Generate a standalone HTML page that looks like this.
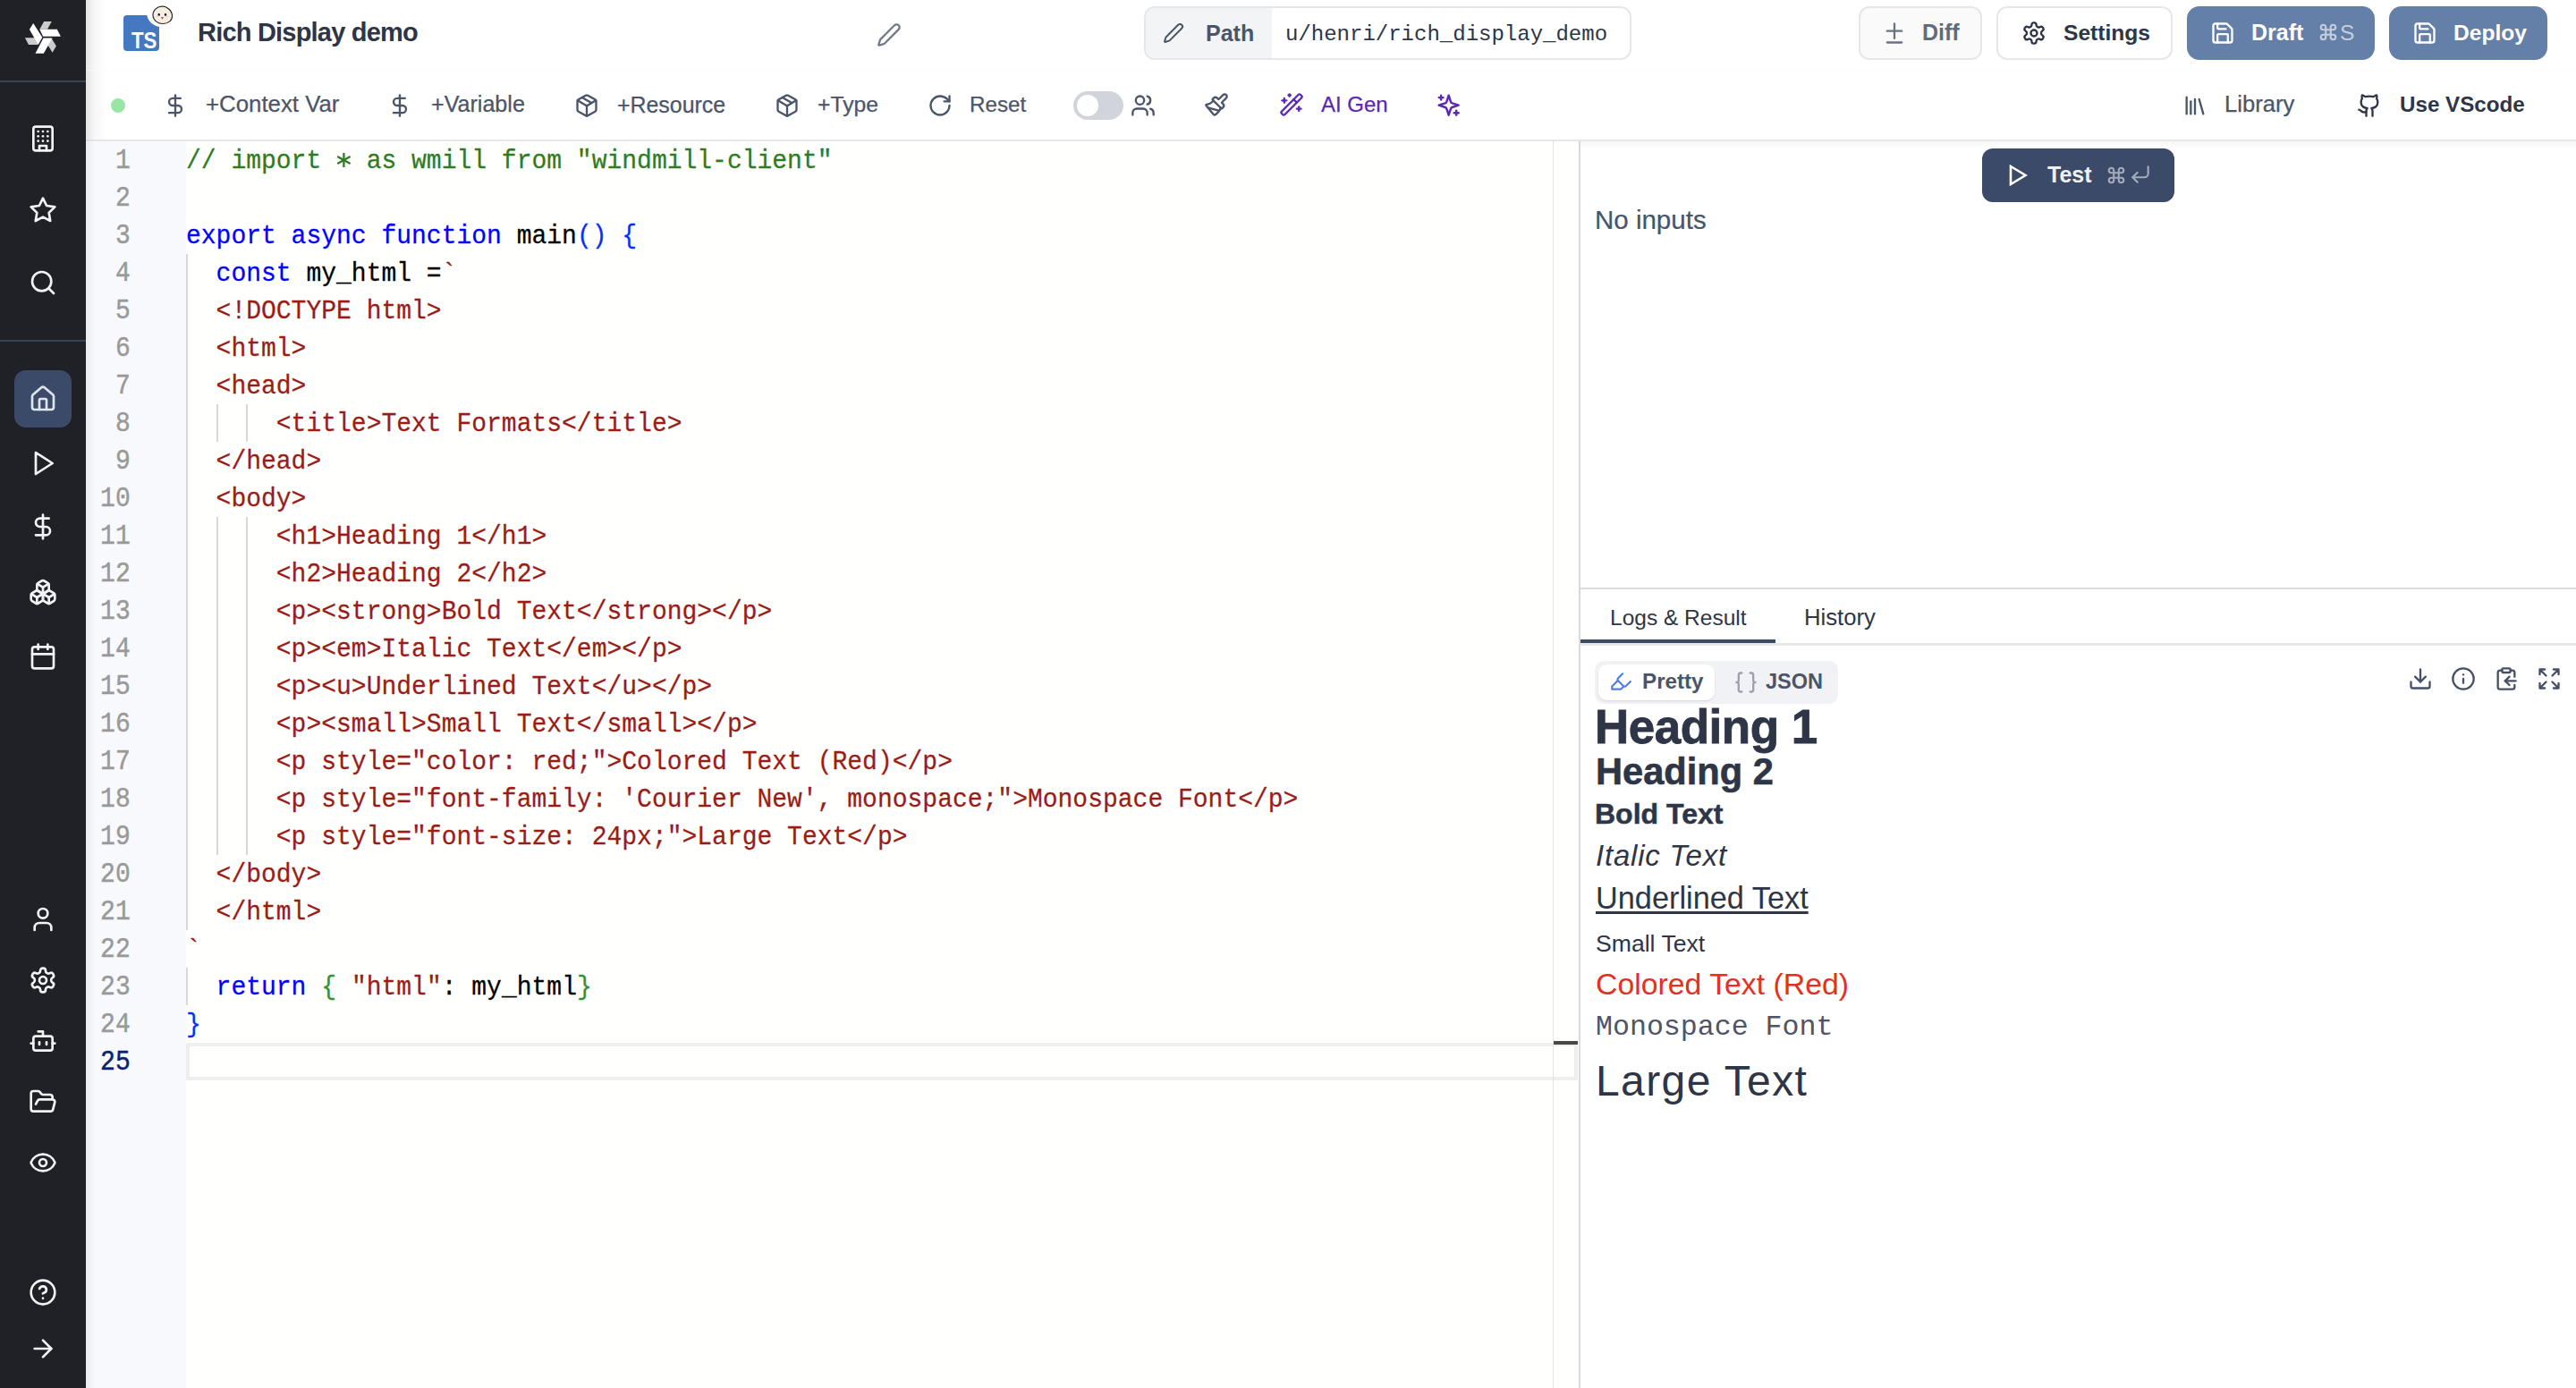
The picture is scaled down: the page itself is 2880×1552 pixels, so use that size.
<!DOCTYPE html>
<html><head><meta charset="utf-8">
<style>
*{box-sizing:border-box;margin:0;padding:0}
html,body{width:2880px;height:1552px;overflow:hidden;background:#fff;font-family:"Liberation Sans",sans-serif}
.a{position:absolute}
svg{display:block;overflow:visible}
.ic{fill:none;stroke:currentColor;stroke-linecap:round;stroke-linejoin:round}
.code{position:absolute;font-family:"Liberation Mono",monospace;font-size:28px;white-space:pre;line-height:42px;height:42px;transform:scaleY(1.05);transform-origin:0 28.5px;-webkit-text-stroke:0.25px currentColor}
.ln{position:absolute;font-family:"Liberation Mono",monospace;font-size:28px;line-height:42px;height:42px;color:#9a9a9a;text-align:right;width:80px;transform:scaleY(1.1);transform-origin:0 28.5px;-webkit-text-stroke:0.4px currentColor}
.b1{color:#0431fa}.cm{color:#2e7c22}.kw{color:#0000ff}.st{color:#9a1c17}.df{color:#000}.gb{color:#319331}
</style></head><body>

<div class="a" style="left:0;top:0;width:96px;height:1552px;background:#1f2127"></div>
<div class="a" style="left:0;top:90px;width:96px;height:2px;background:#3a4356"></div>
<div class="a" style="left:0;top:380px;width:96px;height:2px;background:#3a4356"></div>
<svg class="a" style="left:20px;top:16px" width="56" height="52" viewBox="0 0 56 52">
<polygon points="7.9,26.2 20,26.2 22.5,34.1 12,34.1" fill="#cccccc"/>
<polygon points="17.2,9.9 27.3,25.8 22.8,34.1 12.9,17.0" fill="#ffffff"/>
<polygon points="29.2,8.1 37.8,8.1 33.0,16.7 24.3,16.7" fill="#cccccc"/>
<polygon points="24.3,16.7 43.8,16.7 47.9,24.7 28.1,24.7" fill="#ffffff"/>
<polygon points="37.8,27.3 42.9,35.6 38.6,42.7 33.7,34.8" fill="#cccccc"/>
<polygon points="28.5,26.4 38.6,26.4 28.8,43.8 19.5,43.8" fill="#ffffff"/>
</svg>
<div class="a" style="left:16px;top:414px;width:64px;height:64px;border-radius:13px;background:#3b4a69"></div>
<svg class="a ic" style="left:32px;top:430px;color:#dfe5ef" width="32" height="32" viewBox="0 0 24 24" stroke-width="2"><path d="M15 21v-8a1 1 0 0 0-1-1h-4a1 1 0 0 0-1 1v8"/><path d="M3 10a2 2 0 0 1 .709-1.528l7-5.999a2 2 0 0 1 2.582 0l7 5.999A2 2 0 0 1 21 10v9a2 2 0 0 1-2 2H5a2 2 0 0 1-2-2z"/></svg>
<svg class="a ic" style="left:32px;top:139px;color:#f2f3f5" width="32" height="32" viewBox="0 0 24 24" stroke-width="2"><rect width="16" height="20" x="4" y="2" rx="2" ry="2"/><path d="M9 22v-4h6v4"/><path d="M8 6h.01"/><path d="M16 6h.01"/><path d="M12 6h.01"/><path d="M12 10h.01"/><path d="M12 14h.01"/><path d="M16 10h.01"/><path d="M16 14h.01"/><path d="M8 10h.01"/><path d="M8 14h.01"/></svg>
<svg class="a ic" style="left:32px;top:219px;color:#f2f3f5" width="32" height="32" viewBox="0 0 24 24" stroke-width="2"><polygon points="12 2 15.09 8.26 22 9.27 17 14.14 18.18 21.02 12 17.77 5.82 21.02 7 14.14 2 9.27 8.91 8.26 12 2"/></svg>
<svg class="a ic" style="left:32px;top:300px;color:#f2f3f5" width="32" height="32" viewBox="0 0 24 24" stroke-width="2"><circle cx="11" cy="11" r="8"/><path d="m21 21-4.3-4.3"/></svg>
<svg class="a ic" style="left:32px;top:502px;color:#f2f3f5" width="32" height="32" viewBox="0 0 24 24" stroke-width="2"><polygon points="6 3 20 12 6 21 6 3"/></svg>
<svg class="a ic" style="left:32px;top:573px;color:#f2f3f5" width="32" height="32" viewBox="0 0 24 24" stroke-width="2"><line x1="12" x2="12" y1="2" y2="22"/><path d="M17 5H9.5a3.5 3.5 0 0 0 0 7h5a3.5 3.5 0 0 1 0 7H6"/></svg>
<svg class="a ic" style="left:32px;top:646px;color:#f2f3f5" width="32" height="32" viewBox="0 0 24 24" stroke-width="2"><path d="M2.97 12.92A2 2 0 0 0 2 14.63v3.24a2 2 0 0 0 .97 1.71l3 1.8a2 2 0 0 0 2.06 0L12 19v-5.5l-5-3-4.03 2.42Z"/><path d="m7 16.5-4.74-2.85"/><path d="m7 16.5 5-3"/><path d="M7 16.5v5.17"/><path d="M12 13.5V19l3.970 2.38a2 2 0 0 0 2.06 0l3-1.8a2 2 0 0 0 .97-1.71v-3.24a2 2 0 0 0-.97-1.71L17 10.5l-5 3Z"/><path d="m17 16.5-5-3"/><path d="m17 16.5 4.74-2.85"/><path d="M17 16.5v5.17"/><path d="M7.97 4.42A2 2 0 0 0 7 6.13v4.37l5 3 5-3V6.13a2 2 0 0 0-.97-1.71l-3-1.8a2 2 0 0 0-2.06 0l-3 1.8Z"/><path d="M12 8 7.26 5.15"/><path d="m12 8 4.74-2.85"/><path d="M12 13.5V8"/></svg>
<svg class="a ic" style="left:32px;top:718px;color:#f2f3f5" width="32" height="32" viewBox="0 0 24 24" stroke-width="2"><rect width="18" height="18" x="3" y="4" rx="2" ry="2"/><line x1="16" x2="16" y1="2" y2="6"/><line x1="8" x2="8" y1="2" y2="6"/><line x1="3" x2="21" y1="10" y2="10"/></svg>
<svg class="a ic" style="left:32px;top:1012px;color:#f2f3f5" width="32" height="32" viewBox="0 0 24 24" stroke-width="2"><path d="M19 21v-2a4 4 0 0 0-4-4H9a4 4 0 0 0-4 4v2"/><circle cx="12" cy="7" r="4"/></svg>
<svg class="a ic" style="left:32px;top:1080px;color:#f2f3f5" width="32" height="32" viewBox="0 0 24 24" stroke-width="2"><path d="M12.22 2h-.44a2 2 0 0 0-2 2v.18a2 2 0 0 1-1 1.73l-.43.25a2 2 0 0 1-2 0l-.15-.08a2 2 0 0 0-2.73.73l-.22.38a2 2 0 0 0 .73 2.73l.15.1a2 2 0 0 1 1 1.72v.51a2 2 0 0 1-1 1.74l-.15.09a2 2 0 0 0-.73 2.73l.22.38a2 2 0 0 0 2.730.73l.15-.08a2 2 0 0 1 2 0l.43.25a2 2 0 0 1 1 1.73V20a2 2 0 0 0 2 2h.44a2 2 0 0 0 2-2v-.18a2 2 0 0 1 1-1.730l.43-.25a2 2 0 0 1 2 0l.15.08a2 2 0 0 0 2.73-.73l.22-.39a2 2 0 0 0-.73-2.73l-.15-.08a2 2 0 0 1-1-1.74v-.5a2 2 0 0 1 1-1.74l.15-.09a2 2 0 0 0 .73-2.73l-.22-.38a2 2 0 0 0-2.73-.73l-.15.08a2 2 0 0 1-2 0l-.43-.25a2 2 0 0 1-1-1.73V4a2 2 0 0 0-2-2z"/><circle cx="12" cy="12" r="3"/></svg>
<svg class="a ic" style="left:32px;top:1148px;color:#f2f3f5" width="32" height="32" viewBox="0 0 24 24" stroke-width="2"><path d="M12 8V4H8"/><rect width="16" height="12" x="4" y="8" rx="2"/><path d="M2 14h2"/><path d="M20 14h2"/><path d="M15 13v2"/><path d="M9 13v2"/></svg>
<svg class="a ic" style="left:32px;top:1216px;color:#f2f3f5" width="32" height="32" viewBox="0 0 24 24" stroke-width="2"><path d="m6 14 1.5-2.9A2 2 0 0 1 9.24 10H20a2 2 0 0 1 1.94 2.5l-1.54 6a2 2 0 0 1-1.95 1.5H4a2 2 0 0 1-2-2V5a2 2 0 0 1 2-2h3.9a2 2 0 0 1 1.69.9l.81 1.2a2 2 0 0 0 1.67.9H18a2 2 0 0 1 2 2v2"/></svg>
<svg class="a ic" style="left:32px;top:1284px;color:#f2f3f5" width="32" height="32" viewBox="0 0 24 24" stroke-width="2"><path d="M2.062 12.348a1 1 0 0 1 0-.696 10.75 10.75 0 0 1 19.876 0 1 1 0 0 1 0 .696 10.75 10.75 0 0 1-19.876 0"/><circle cx="12" cy="12" r="3"/></svg>
<svg class="a ic" style="left:32px;top:1428.5px;color:#f2f3f5" width="32" height="32" viewBox="0 0 24 24" stroke-width="2"><circle cx="12" cy="12" r="10"/><path d="M9.09 9a3 3 0 0 1 5.83 1c0 2-3 3-3 3"/><path d="M12 17h.01"/></svg>
<svg class="a ic" style="left:32px;top:1492px;color:#f2f3f5" width="32" height="32" viewBox="0 0 24 24" stroke-width="2"><path d="M5 12h14"/><path d="m12 5 7 7-7 7"/></svg>
<div class="a" style="left:96px;top:0;width:24px;height:1552px;background:linear-gradient(to right,rgba(0,0,0,0.05),rgba(0,0,0,0))"></div>
<div class="a" style="left:96px;top:78px;width:2784px;height:1px;background:#fafbfc"></div>
<svg class="a" style="left:138px;top:17px" width="40" height="40" viewBox="0 0 40 40">
<rect x="0" y="0" width="40" height="40" rx="4" fill="#4478c1"/>
<text x="9" y="36.7" textLength="28.5" lengthAdjust="spacingAndGlyphs" font-family="Liberation Sans" font-weight="700" font-size="25.5" fill="#fff">TS</text>
</svg>
<svg class="a" style="left:160px;top:0px" width="40" height="36" viewBox="0 0 40 36">
<circle cx="20" cy="14" r="16" fill="#fff"/>
<path d="M21 7 C15 7.5 10.5 12 11 17.5 C11.5 23 16.5 26.5 22 26.5 C28 26.5 32.5 23 32.5 18 C32.5 12 27 7 21 7Z" fill="#f6efe0" stroke="#222" stroke-width="1.1"/>
<ellipse cx="17.7" cy="16.4" rx="1.2" ry="1.3" fill="#111"/><ellipse cx="25" cy="16.4" rx="1.2" ry="1.3" fill="#111"/>
<ellipse cx="16" cy="18.3" rx="1.5" ry="0.8" fill="#f5c6d6"/><ellipse cx="27" cy="18.3" rx="1.5" ry="0.8" fill="#f5c6d6"/>
<path d="M19.8 19.2 h3.3 l-1.65 2.4z" fill="#c0282d"/>
</svg>
<div class="a" style="left:221px;top:22.45px;font-size:29px;color:#2e3546;font-weight:700;font-family:'Liberation Sans';line-height:1;white-space:pre;letter-spacing:-0.8px">Rich Display demo</div>
<svg class="a ic" style="left:979.8px;top:24.6px;color:#737b88" width="28" height="28" viewBox="0 0 24 24" stroke-width="2"><path d="M21.174 6.812a1 1 0 0 0-3.986-3.987L3.842 16.174a2 2 0 0 0-.5.83l-1.321 4.352a.5.5 0 0 0 .623.622l4.353-1.32a2 2 0 0 0 .83-.497z"/></svg>
<div class="a" style="left:1279px;top:7px;width:545px;height:60px;border:2px solid #e5e7eb;border-radius:12px;background:#fff;overflow:hidden"><div style="position:absolute;left:0;top:0;width:141px;height:56px;background:#f3f4f6"></div></div>
<svg class="a ic" style="left:1300px;top:25px;color:#4b5563" width="24" height="24" viewBox="0 0 24 24" stroke-width="2"><path d="M21.174 6.812a1 1 0 0 0-3.986-3.987L3.842 16.174a2 2 0 0 0-.5.83l-1.321 4.352a.5.5 0 0 0 .623.622l4.353-1.32a2 2 0 0 0 .83-.497z"/></svg>
<div class="a" style="left:1348px;top:24.84px;font-size:25px;color:#4b5569;font-weight:700;font-family:'Liberation Sans';line-height:1;white-space:pre">Path</div>
<div class="a" style="left:1437px;top:26.60px;font-size:24px;color:#2d3546;font-weight:400;font-family:'Liberation Mono';line-height:1;white-space:pre">u/henri/rich_display_demo</div>
<div class="a" style="left:2078px;top:7px;width:138px;height:60px;border:2px solid #e5e7eb;border-radius:12px;background:#fafafa"></div>
<svg class="a ic" style="left:2104px;top:23px;color:#6b7280" width="28" height="28" viewBox="0 0 24 24" stroke-width="2"><path d="M12 3v14"/><path d="M5 10h14"/><path d="M5 21h14"/></svg>
<div class="a" style="left:2149px;top:24.34px;font-size:25px;color:#5f6b7e;font-weight:700;font-family:'Liberation Sans';line-height:1;white-space:pre">Diff</div>
<div class="a" style="left:2232px;top:7px;width:197px;height:60px;border:2px solid #e5e7eb;border-radius:12px;background:#fff"></div>
<svg class="a ic" style="left:2260px;top:23px;color:#2d3546" width="28" height="28" viewBox="0 0 24 24" stroke-width="2"><path d="M12.22 2h-.44a2 2 0 0 0-2 2v.18a2 2 0 0 1-1 1.73l-.43.25a2 2 0 0 1-2 0l-.15-.08a2 2 0 0 0-2.73.73l-.22.38a2 2 0 0 0 .73 2.73l.15.1a2 2 0 0 1 1 1.72v.51a2 2 0 0 1-1 1.74l-.15.09a2 2 0 0 0-.73 2.73l.22.38a2 2 0 0 0 2.730.73l.15-.08a2 2 0 0 1 2 0l.43.25a2 2 0 0 1 1 1.73V20a2 2 0 0 0 2 2h.44a2 2 0 0 0 2-2v-.18a2 2 0 0 1 1-1.730l.43-.25a2 2 0 0 1 2 0l.15.08a2 2 0 0 0 2.73-.73l.22-.39a2 2 0 0 0-.73-2.73l-.15-.08a2 2 0 0 1-1-1.74v-.5a2 2 0 0 1 1-1.74l.15-.09a2 2 0 0 0 .73-2.73l-.22-.38a2 2 0 0 0-2.73-.73l-.15.08a2 2 0 0 1-2 0l-.43-.25a2 2 0 0 1-1-1.73V4a2 2 0 0 0-2-2z"/><circle cx="12" cy="12" r="3"/></svg>
<div class="a" style="left:2307px;top:24.68px;font-size:24.6px;color:#2d3546;font-weight:700;font-family:'Liberation Sans';line-height:1;white-space:pre">Settings</div>
<div class="a" style="left:2445px;top:7px;width:210px;height:60px;border-radius:14px;background:#6580a8"></div>
<svg class="a ic" style="left:2471px;top:23px;color:#ffffff" width="28" height="28" viewBox="0 0 24 24" stroke-width="2"><path d="M15.2 3a2 2 0 0 1 1.4.6l3.8 3.8a2 2 0 0 1 .6 1.4V19a2 2 0 0 1-2 2H5a2 2 0 0 1-2-2V5a2 2 0 0 1 2-2z"/><path d="M17 21v-7a1 1 0 0 0-1-1H8a1 1 0 0 0-1 1v7"/><path d="M7 3v4a1 1 0 0 0 1 1h7"/></svg>
<div class="a" style="left:2517px;top:24.34px;font-size:25px;color:#ffffff;font-weight:700;font-family:'Liberation Sans';line-height:1;white-space:pre">Draft</div>
<svg class="a ic" style="left:2592px;top:25px;color:#c5cedd" width="22" height="22" viewBox="0 0 24 24" stroke-width="2.3"><path d="M15 6v12a3 3 0 1 0 3-3H6a3 3 0 1 0 3 3V6a3 3 0 1 0-3 3h12a3 3 0 1 0-3-3"/></svg>
<div class="a" style="left:2616px;top:24.76px;font-size:24.5px;color:#c5cedd;font-weight:400;font-family:'Liberation Sans';line-height:1;white-space:pre">S</div>
<div class="a" style="left:2671px;top:7px;width:177px;height:60px;border-radius:14px;background:#6580a8"></div>
<svg class="a ic" style="left:2697px;top:23px;color:#ffffff" width="28" height="28" viewBox="0 0 24 24" stroke-width="2"><path d="M15.2 3a2 2 0 0 1 1.4.6l3.8 3.8a2 2 0 0 1 .6 1.4V19a2 2 0 0 1-2 2H5a2 2 0 0 1-2-2V5a2 2 0 0 1 2-2z"/><path d="M17 21v-7a1 1 0 0 0-1-1H8a1 1 0 0 0-1 1v7"/><path d="M7 3v4a1 1 0 0 0 1 1h7"/></svg>
<div class="a" style="left:2743px;top:24.68px;font-size:24.6px;color:#ffffff;font-weight:700;font-family:'Liberation Sans';line-height:1;white-space:pre">Deploy</div>
<div class="a" style="left:96px;top:156px;width:2784px;height:2px;background:#e5e7eb"></div>
<div class="a" style="left:124px;top:110px;width:16px;height:16px;border-radius:50%;background:#98e6a6"></div>
<svg class="a ic" style="left:182px;top:104px;color:#4b5569" width="28" height="28" viewBox="0 0 24 24" stroke-width="2"><line x1="12" x2="12" y1="2" y2="22"/><path d="M17 5H9.5a3.5 3.5 0 0 0 0 7h5a3.5 3.5 0 0 1 0 7H6"/></svg>
<div class="a" style="left:230px;top:103.86px;font-size:25.8px;color:#4b5569;font-weight:400;font-family:'Liberation Sans';line-height:1;white-space:pre;-webkit-text-stroke:0.25px currentColor">+Context Var</div>
<svg class="a ic" style="left:433px;top:104px;color:#4b5569" width="28" height="28" viewBox="0 0 24 24" stroke-width="2"><line x1="12" x2="12" y1="2" y2="22"/><path d="M17 5H9.5a3.5 3.5 0 0 0 0 7h5a3.5 3.5 0 0 1 0 7H6"/></svg>
<div class="a" style="left:482px;top:104.45px;font-size:25.1px;color:#4b5569;font-weight:400;font-family:'Liberation Sans';line-height:1;white-space:pre;-webkit-text-stroke:0.25px currentColor">+Variable</div>
<svg class="a ic" style="left:642px;top:104px;color:#4b5569" width="28" height="28" viewBox="0 0 24 24" stroke-width="2"><path d="M11 21.73a2 2 0 0 0 2 0l7-4A2 2 0 0 0 21 16V8a2 2 0 0 0-1-1.73l-7-4a2 2 0 0 0-2 0l-7 4A2 2 0 0 0 3 8v8a2 2 0 0 0 1 1.73z"/><path d="M12 22V12"/><path d="m3.3 7 7.703 4.734a2 2 0 0 0 1.994 0L20.7 7"/><path d="m7.5 4.27 9 5.15"/></svg>
<div class="a" style="left:690px;top:104.62px;font-size:24.9px;color:#4b5569;font-weight:400;font-family:'Liberation Sans';line-height:1;white-space:pre;-webkit-text-stroke:0.25px currentColor">+Resource</div>
<svg class="a ic" style="left:866px;top:104px;color:#4b5569" width="28" height="28" viewBox="0 0 24 24" stroke-width="2"><path d="M11 21.73a2 2 0 0 0 2 0l7-4A2 2 0 0 0 21 16V8a2 2 0 0 0-1-1.73l-7-4a2 2 0 0 0-2 0l-7 4A2 2 0 0 0 3 8v8a2 2 0 0 0 1 1.73z"/><path d="M12 22V12"/><path d="m3.3 7 7.703 4.734a2 2 0 0 0 1.994 0L20.7 7"/><path d="m7.5 4.27 9 5.15"/></svg>
<div class="a" style="left:914px;top:104.79px;font-size:24.7px;color:#4b5569;font-weight:400;font-family:'Liberation Sans';line-height:1;white-space:pre;-webkit-text-stroke:0.25px currentColor">+Type</div>
<svg class="a ic" style="left:1037px;top:104px;color:#4b5569" width="28" height="28" viewBox="0 0 24 24" stroke-width="2"><path d="M21 12a9 9 0 1 1-9-9c2.52 0 4.93 1 6.74 2.74L21 8"/><path d="M21 3v5h-5"/></svg>
<div class="a" style="left:1084px;top:105.21px;font-size:24.2px;color:#4b5569;font-weight:400;font-family:'Liberation Sans';line-height:1;white-space:pre;-webkit-text-stroke:0.25px currentColor">Reset</div>
<div class="a" style="left:1200px;top:102px;width:56px;height:32px;border-radius:16px;background:#d1d5db"></div>
<div class="a" style="left:1204px;top:106px;width:24px;height:24px;border-radius:50%;background:#fff"></div>
<svg class="a ic" style="left:1264px;top:104px;color:#4b5569" width="28" height="28" viewBox="0 0 24 24" stroke-width="2"><path d="M16 21v-2a4 4 0 0 0-4-4H6a4 4 0 0 0-4 4v2"/><circle cx="9" cy="7" r="4"/><path d="M22 21v-2a4 4 0 0 0-3-3.87"/><path d="M16 3.13a4 4 0 0 1 0 7.75"/></svg>
<svg class="a ic" style="left:1346px;top:103px;color:#4b5569" width="28" height="28" viewBox="0 0 24 24" stroke-width="2"><path d="m14.622 17.897-10.68-2.913"/><path d="M18.376 2.622a1 1 0 1 1 3.002 3.002L17.36 9.643a.5.5 0 0 0 0 .707l.944.944a2.41 2.41 0 0 1 0 3.408l-.944.944a.5.5 0 0 1-.707 0L8.354 7.348a.5.5 0 0 1 0-.707l.944-.944a2.41 2.41 0 0 1 3.408 0l.944.944a.5.5 0 0 0 .707 0z"/><path d="M9 8c-1.804 2.71-3.97 3.46-6.583 3.948a.507.507 0 0 0-.302.819l7.32 8.883a1 1 0 0 0 1.185.204C12.735 20.405 16 16.792 16 15"/></svg>
<svg class="a ic" style="left:1430px;top:103px;color:#5b27b5" width="28" height="28" viewBox="0 0 24 24" stroke-width="2"><path d="m21.64 3.64-1.28-1.28a1.21 1.21 0 0 0-1.72 0L2.36 18.64a1.21 1.21 0 0 0 0 1.72l1.28 1.28a1.2 1.2 0 0 0 1.72 0L21.64 5.36a1.2 1.2 0 0 0 0-1.72"/><path d="m14 7 3 3"/><path d="M5 6v4"/><path d="M19 14v4"/><path d="M10 2v2"/><path d="M7 8H3"/><path d="M21 16h-4"/><path d="M11 3H9"/></svg>
<div class="a" style="left:1477px;top:105.28px;font-size:24px;color:#5b27b5;font-weight:400;font-family:'Liberation Sans';line-height:1;white-space:pre;-webkit-text-stroke:0.25px currentColor">AI Gen</div>
<svg class="a ic" style="left:1605.3px;top:103.3px;color:#5b27b5" width="29.3" height="29.3" viewBox="0 0 24 24" stroke-width="2"><path d="m12 3-1.912 5.813a2 2 0 0 1-1.275 1.275L3 12l5.813 1.912a2 2 0 0 1 1.275 1.275L12 21l1.912-5.813a2 2 0 0 1 1.275-1.275L21 12l-5.813-1.912a2 2 0 0 1-1.275-1.275L12 3Z"/><path d="M5 3v4"/><path d="M19 17v4"/><path d="M3 5h4"/><path d="M17 19h4"/></svg>
<svg class="a ic" style="left:2440px;top:104px;color:#4b5569" width="28" height="28" viewBox="0 0 24 24" stroke-width="2"><path d="m16 6 4 14"/><path d="M12 6v14"/><path d="M8 8v12"/><path d="M4 4v16"/></svg>
<div class="a" style="left:2487px;top:103.83px;font-size:25.6px;color:#4b5569;font-weight:400;font-family:'Liberation Sans';line-height:1;white-space:pre;-webkit-text-stroke:0.25px currentColor">Library</div>
<svg class="a ic" style="left:2635px;top:104px;color:#2d3546" width="28" height="28" viewBox="0 0 24 24" stroke-width="2"><path d="M15 22v-4a4.8 4.8 0 0 0-1-3.5c3 0 6-2 6-5.5.08-1.25-.27-2.48-1-3.5.28-1.15.28-2.35 0-3.5 0 0-1 0-3 1.5-2.64-.5-5.36-.5-8 0C6 2 5 2 5 2c-.3 1.15-.3 2.35 0 3.5A5.403 5.403 0 0 0 4 9c0 3.5 3 5.5 6 5.5-.39.49-.68 1.05-.85 1.650-.17.6-.22 1.23-.15 1.85v4"/><path d="M9 18c-4.51 2-5-2-7-2"/></svg>
<div class="a" style="left:2683px;top:105.01px;font-size:24.2px;color:#2d3546;font-weight:700;font-family:'Liberation Sans';line-height:1;white-space:pre">Use VScode</div>
<div class="a" style="left:96px;top:158px;width:1670px;height:1394px;background:#fffffe"></div>
<div class="a" style="left:96px;top:158px;width:112px;height:1394px;background:#f8f9fc"></div>
<div class="a" style="left:96px;top:0;width:10px;height:1552px;background:linear-gradient(to right,rgba(0,0,0,0.06),rgba(0,0,0,0))"></div>
<div class="a" style="left:208px;top:1166px;width:1556px;height:42px;border:4px solid #eeeeee"></div>
<div class="a" style="left:208.0px;top:284px;width:2px;height:756px;background:#d8d8d8"></div>
<div class="a" style="left:208.0px;top:1082px;width:2px;height:42px;background:#d8d8d8"></div>
<div class="a" style="left:241.6px;top:452px;width:2px;height:42px;background:#d8d8d8"></div>
<div class="a" style="left:275.2px;top:452px;width:2px;height:42px;background:#d8d8d8"></div>
<div class="a" style="left:241.6px;top:578px;width:2px;height:378px;background:#d8d8d8"></div>
<div class="a" style="left:275.2px;top:578px;width:2px;height:378px;background:#d8d8d8"></div>
<div class="ln" style="left:65.7px;top:159.5px;color:#999999">1</div>
<div class="code" style="left:208px;top:159.5px"><span class="cm">// import   as wmill from &quot;windmill-client&quot;</span></div>
<div class="ln" style="left:65.7px;top:201.5px;color:#999999">2</div>
<div class="ln" style="left:65.7px;top:243.5px;color:#999999">3</div>
<div class="code" style="left:208px;top:243.5px"><span class="kw">export async function </span><span class="df">main</span><span class="b1">() {</span></div>
<div class="ln" style="left:65.7px;top:285.5px;color:#999999">4</div>
<div class="code" style="left:208px;top:285.5px"><span class="df">  </span><span class="kw">const</span><span class="df"> my_html =</span><span class="st">`</span></div>
<div class="ln" style="left:65.7px;top:327.5px;color:#999999">5</div>
<div class="code" style="left:208px;top:327.5px"><span class="st">  &lt;!DOCTYPE html&gt;</span></div>
<div class="ln" style="left:65.7px;top:369.5px;color:#999999">6</div>
<div class="code" style="left:208px;top:369.5px"><span class="st">  &lt;html&gt;</span></div>
<div class="ln" style="left:65.7px;top:411.5px;color:#999999">7</div>
<div class="code" style="left:208px;top:411.5px"><span class="st">  &lt;head&gt;</span></div>
<div class="ln" style="left:65.7px;top:453.5px;color:#999999">8</div>
<div class="code" style="left:208px;top:453.5px"><span class="st">      &lt;title&gt;Text Formats&lt;/title&gt;</span></div>
<div class="ln" style="left:65.7px;top:495.5px;color:#999999">9</div>
<div class="code" style="left:208px;top:495.5px"><span class="st">  &lt;/head&gt;</span></div>
<div class="ln" style="left:65.7px;top:537.5px;color:#999999">10</div>
<div class="code" style="left:208px;top:537.5px"><span class="st">  &lt;body&gt;</span></div>
<div class="ln" style="left:65.7px;top:579.5px;color:#999999">11</div>
<div class="code" style="left:208px;top:579.5px"><span class="st">      &lt;h1&gt;Heading 1&lt;/h1&gt;</span></div>
<div class="ln" style="left:65.7px;top:621.5px;color:#999999">12</div>
<div class="code" style="left:208px;top:621.5px"><span class="st">      &lt;h2&gt;Heading 2&lt;/h2&gt;</span></div>
<div class="ln" style="left:65.7px;top:663.5px;color:#999999">13</div>
<div class="code" style="left:208px;top:663.5px"><span class="st">      &lt;p&gt;&lt;strong&gt;Bold Text&lt;/strong&gt;&lt;/p&gt;</span></div>
<div class="ln" style="left:65.7px;top:705.5px;color:#999999">14</div>
<div class="code" style="left:208px;top:705.5px"><span class="st">      &lt;p&gt;&lt;em&gt;Italic Text&lt;/em&gt;&lt;/p&gt;</span></div>
<div class="ln" style="left:65.7px;top:747.5px;color:#999999">15</div>
<div class="code" style="left:208px;top:747.5px"><span class="st">      &lt;p&gt;&lt;u&gt;Underlined Text&lt;/u&gt;&lt;/p&gt;</span></div>
<div class="ln" style="left:65.7px;top:789.5px;color:#999999">16</div>
<div class="code" style="left:208px;top:789.5px"><span class="st">      &lt;p&gt;&lt;small&gt;Small Text&lt;/small&gt;&lt;/p&gt;</span></div>
<div class="ln" style="left:65.7px;top:831.5px;color:#999999">17</div>
<div class="code" style="left:208px;top:831.5px"><span class="st">      &lt;p style=&quot;color: red;&quot;&gt;Colored Text (Red)&lt;/p&gt;</span></div>
<div class="ln" style="left:65.7px;top:873.5px;color:#999999">18</div>
<div class="code" style="left:208px;top:873.5px"><span class="st">      &lt;p style=&quot;font-family: &#x27;Courier New&#x27;, monospace;&quot;&gt;Monospace Font&lt;/p&gt;</span></div>
<div class="ln" style="left:65.7px;top:915.5px;color:#999999">19</div>
<div class="code" style="left:208px;top:915.5px"><span class="st">      &lt;p style=&quot;font-size: 24px;&quot;&gt;Large Text&lt;/p&gt;</span></div>
<div class="ln" style="left:65.7px;top:957.5px;color:#999999">20</div>
<div class="code" style="left:208px;top:957.5px"><span class="st">  &lt;/body&gt;</span></div>
<div class="ln" style="left:65.7px;top:999.5px;color:#999999">21</div>
<div class="code" style="left:208px;top:999.5px"><span class="st">  &lt;/html&gt;</span></div>
<div class="ln" style="left:65.7px;top:1041.5px;color:#999999">22</div>
<div class="code" style="left:208px;top:1041.5px"><span class="st">`</span></div>
<div class="ln" style="left:65.7px;top:1083.5px;color:#999999">23</div>
<div class="code" style="left:208px;top:1083.5px"><span class="df">  </span><span class="kw">return</span><span class="df"> </span><span class="gb">{</span><span class="df"> </span><span class="st">&quot;html&quot;</span><span class="df">: my_html</span><span class="gb">}</span></div>
<div class="ln" style="left:65.7px;top:1125.5px;color:#999999">24</div>
<div class="code" style="left:208px;top:1125.5px"><span class="b1">}</span></div>
<div class="ln" style="left:65.7px;top:1167.5px;color:#0b216f">25</div>
<svg class="a" style="left:376px;top:170px" width="17" height="18" viewBox="0 0 17 18"><g stroke="#2e7c22" stroke-width="2.3"><line x1="8.4" y1="1" x2="8.4" y2="17"/><line x1="1.2" y1="4.9" x2="15.6" y2="13.1"/><line x1="1.2" y1="13.1" x2="15.6" y2="4.9"/></g></svg>
<div class="a" style="left:1736px;top:158px;width:1px;height:1394px;background:#e3e3e3"></div>
<div class="a" style="left:1737px;top:1164px;width:27px;height:4px;background:#474747"></div>
<div class="a" style="left:1765px;top:158px;width:2px;height:1394px;background:#d9d9d9"></div>
<div class="a" style="left:1767px;top:158px;width:1113px;height:8px;background:linear-gradient(to bottom,rgba(0,0,0,0.035),rgba(0,0,0,0))"></div>
<div class="a" style="left:2216px;top:166px;width:215px;height:60px;border-radius:12px;background:#3b4a69"></div>
<svg class="a" style="left:2245px;top:183px" width="22" height="26" viewBox="0 0 22 26"><polygon points="3,3 19.5,13 3,23" fill="none" stroke="#fff" stroke-width="2.6" stroke-linejoin="miter"/></svg>
<div class="a" style="left:2289px;top:183.14px;font-size:25px;color:#eef0f3;font-weight:700;font-family:'Liberation Sans';line-height:1;white-space:pre">Test</div>
<svg class="a ic" style="left:2355px;top:184.5px;color:#a3abba" width="22" height="22" viewBox="0 0 24 24" stroke-width="2.3"><path d="M15 6v12a3 3 0 1 0 3-3H6a3 3 0 1 0 3 3V6a3 3 0 1 0-3 3h12a3 3 0 1 0-3-3"/></svg>
<svg class="a ic" style="left:2380px;top:182px;color:#a3abba" width="26" height="26" viewBox="0 0 24 24" stroke-width="2"><polyline points="9 10 4 15 9 20"/><path d="M20 4v7a4 4 0 0 1-4 4H4"/></svg>
<div class="a" style="left:1783px;top:230.73px;font-size:29.5px;color:#475569;font-weight:400;font-family:'Liberation Sans';line-height:1;white-space:pre;-webkit-text-stroke:0.2px currentColor">No inputs</div>
<div class="a" style="left:1767px;top:657px;width:1113px;height:2px;background:#dcdcdc"></div>
<div class="a" style="left:1800px;top:679.26px;font-size:24.5px;color:#2d3546;font-weight:400;font-family:'Liberation Sans';line-height:1;white-space:pre">Logs &amp; Result</div>
<div class="a" style="left:2017px;top:678.24px;font-size:25.7px;color:#2d3546;font-weight:400;font-family:'Liberation Sans';line-height:1;white-space:pre">History</div>
<div class="a" style="left:1767px;top:719px;width:1113px;height:3px;background:#e5e7eb"></div>
<div class="a" style="left:1767px;top:715px;width:218px;height:4px;background:#3d4a63"></div>
<div class="a" style="left:1783px;top:739px;width:272px;height:48px;border-radius:10px;background:#f1f2f5"></div>
<div class="a" style="left:1787px;top:743px;width:130px;height:40px;border-radius:9px;background:#fff;box-shadow:0 1px 2px rgba(0,0,0,0.12)"></div>
<svg class="a ic" style="left:1799px;top:749px;color:#4f7ee8" width="26" height="26" viewBox="0 0 24 24" stroke-width="2"><path d="m9 11-6 6v3h9l3-3"/><path d="m22 12-4.6 4.6a2 2 0 0 1-2.8 0l-5.2-5.2a2 2 0 0 1 0-2.8L14 4"/></svg>
<div class="a" style="left:1836px;top:750.31px;font-size:24.2px;color:#4b5569;font-weight:700;font-family:'Liberation Sans';line-height:1;white-space:pre">Pretty</div>
<svg class="a ic" style="left:1938px;top:749px;color:#9aa1ad" width="28" height="28" viewBox="0 0 24 24" stroke-width="2"><path d="M8 3H7a2 2 0 0 0-2 2v5a2 2 0 0 1-2 2 2 2 0 0 1 2 2v5c0 1.1.9 2 2 2h1"/><path d="M16 21h1a2 2 0 0 0 2-2v-5c0-1.1.9-2 2-2a2 2 0 0 1-2-2V5a2 2 0 0 0-2-2h-1"/></svg>
<div class="a" style="left:1974px;top:750.91px;font-size:23.5px;color:#4b5569;font-weight:700;font-family:'Liberation Sans';line-height:1;white-space:pre">JSON</div>
<svg class="a ic" style="left:2692px;top:745px;color:#465064" width="28" height="28" viewBox="0 0 24 24" stroke-width="2"><path d="M21 15v4a2 2 0 0 1-2 2H5a2 2 0 0 1-2-2v-4"/><polyline points="7 10 12 15 17 10"/><line x1="12" x2="12" y1="15" y2="3"/></svg>
<svg class="a ic" style="left:2740px;top:745px;color:#465064" width="28" height="28" viewBox="0 0 24 24" stroke-width="2"><circle cx="12" cy="12" r="10"/><path d="M12 16v-4"/><path d="M12 8h.01"/></svg>
<svg class="a ic" style="left:2788px;top:745px;color:#465064" width="28" height="28" viewBox="0 0 24 24" stroke-width="2"><rect width="8" height="4" x="8" y="2" rx="1" ry="1"/><path d="M8 4H6a2 2 0 0 0-2 2v14a2 2 0 0 0 2 2h12a2 2 0 0 0 2-2v-2"/><path d="M16 4h2a2 2 0 0 1 2 2v4"/><path d="M21 14H11"/><path d="m15 10-4 4 4 4"/></svg>
<svg class="a ic" style="left:2836px;top:745px;color:#465064" width="28" height="28" viewBox="0 0 24 24" stroke-width="2"><path d="m21 21-6-6m6 6v-4.8m0 4.8h-4.8"/><path d="M3 16.2V21m0 0h4.8M3 21l6-6"/><path d="M21 7.8V3m0 0h-4.8M21 3l-6 6"/><path d="M3 7.8V3m0 0h4.8M3 3l6 6"/></svg>
<div class="a" style="left:1783px;top:786.14px;font-size:53px;color:#2e3546;font-weight:700;font-family:'Liberation Sans';line-height:1;white-space:pre;letter-spacing:-0.5px;-webkit-text-stroke:0.8px currentColor">Heading 1</div>
<div class="a" style="left:1784px;top:842.29px;font-size:41.6px;color:#2e3546;font-weight:700;font-family:'Liberation Sans';line-height:1;white-space:pre;-webkit-text-stroke:0.6px currentColor">Heading 2</div>
<div class="a" style="left:1783px;top:893.51px;font-size:32px;color:#2e3546;font-weight:700;font-family:'Liberation Sans';line-height:1;white-space:pre;-webkit-text-stroke:0.5px currentColor">Bold Text</div>
<div class="a" style="left:1784px;top:940.37px;font-size:33px;color:#2e3546;font-weight:400;font-family:'Liberation Sans';line-height:1;white-space:pre;font-style:italic;letter-spacing:0.8px">Italic Text</div>
<div class="a" style="left:1784px;top:986.97px;font-size:34.3px;color:#2e3546;font-weight:400;font-family:'Liberation Sans';line-height:1;white-space:pre;text-decoration:underline;text-decoration-thickness:2.5px;text-underline-offset:3px">Underlined Text</div>
<div class="a" style="left:1784px;top:1042.48px;font-size:26.6px;color:#2e3546;font-weight:400;font-family:'Liberation Sans';line-height:1;white-space:pre">Small Text</div>
<div class="a" style="left:1784px;top:1083.99px;font-size:33.8px;color:#e6301f;font-weight:400;font-family:'Liberation Sans';line-height:1;white-space:pre">Colored Text (Red)</div>
<div class="a" style="left:1784px;top:1133.48px;font-size:31.6px;color:#4d5566;font-weight:400;font-family:'Liberation Mono';line-height:1;white-space:pre">Monospace Font</div>
<div class="a" style="left:1784px;top:1184.87px;font-size:48px;color:#2e3546;font-weight:400;font-family:'Liberation Sans';line-height:1;white-space:pre;letter-spacing:1.4px">Large Text</div>
</body></html>
